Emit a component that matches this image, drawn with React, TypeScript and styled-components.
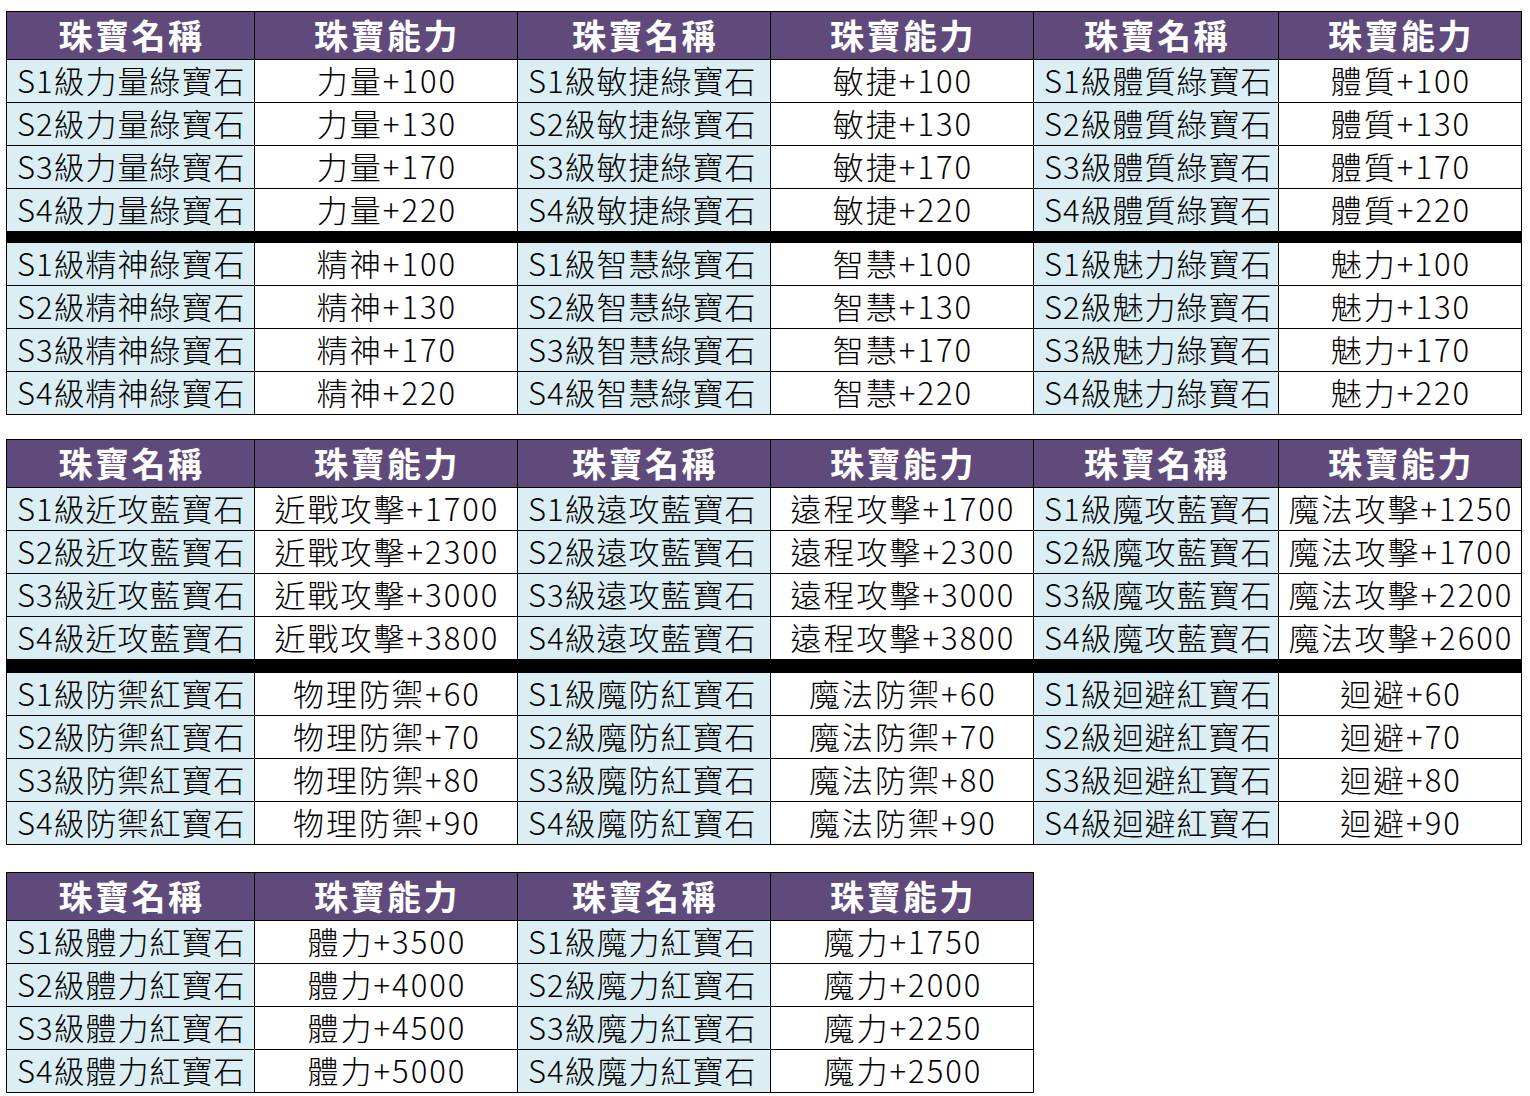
import React from "react";
import styled, { createGlobalStyle } from "styled-components";

const GlobalStyle = createGlobalStyle`
  html, body {
    margin: 0;
    padding: 0;
    background: #ffffff;
  }
  body {
    font-family: "Noto Sans CJK TC", "Noto Sans", sans-serif;
    color: #000;
  }
`;

const Page = styled.div`
  padding: 11px 0 0 6px;
  display: flex;
  flex-direction: column;
  align-items: flex-start;
`;

const Table = styled.table<{ $gap: number }>`
  border-collapse: collapse;
  table-layout: fixed;
  margin-bottom: ${({ $gap }) => $gap}px;
`;

const HeadCell = styled.th`
  background: #604a7b;
  color: #ffffff;
  border: 1px solid #000;
  height: 45px;
  padding: 0 0 2px 2px;
  font-size: 34px;
  font-weight: 700;
  line-height: 44px;
  text-align: center;
  letter-spacing: 2.5px;
`;

const Row = styled.tr<{ $split: number }>`
  & > td {
    border-top: ${({ $split }) => ($split ? `${$split}px solid #000` : "1px solid #000")};
  }
`;

const Cell = styled.td<{ $kind: "name" | "value" }>`
  border: 1px solid #000;
  height: 40px;
  padding: 0 0 2px ${({ $kind }) => ($kind === "name" ? "10px" : "2px")};
  background: ${({ $kind }) => ($kind === "name" ? "#daeef3" : "#ffffff")};
  text-align: ${({ $kind }) => ($kind === "name" ? "left" : "center")};
  font-size: 31px;
  font-weight: 300;
  letter-spacing: ${({ $kind }) => ($kind === "name" ? "1px" : "2px")};
  line-height: 40px;
  white-space: nowrap;
`;

const widths = [248, 263, 253, 263, 245, 243];

type Gem = { name: string; value: string };

const levels = ["S1", "S2", "S3", "S4"];

function series(kind: string, stat: string, nums: number[]): Gem[] {
  return levels.map((lv, i) => ({ name: `${lv}級${kind}寶石`, value: `${stat}+${nums[i]}` }));
}

const base = [100, 130, 170, 220];

const tables: { groups: Gem[][][]; split: number; gap: number }[] = [
  {
    groups: [
      [series("力量綠", "力量", base), series("敏捷綠", "敏捷", base), series("體質綠", "體質", base)],
      [series("精神綠", "精神", base), series("智慧綠", "智慧", base), series("魅力綠", "魅力", base)],
    ],
    split: 12,
    gap: 24,
  },
  {
    groups: [
      [
        series("近攻藍", "近戰攻擊", [1700, 2300, 3000, 3800]),
        series("遠攻藍", "遠程攻擊", [1700, 2300, 3000, 3800]),
        series("魔攻藍", "魔法攻擊", [1250, 1700, 2200, 2600]),
      ],
      [
        series("防禦紅", "物理防禦", [60, 70, 80, 90]),
        series("魔防紅", "魔法防禦", [60, 70, 80, 90]),
        series("迴避紅", "迴避", [60, 70, 80, 90]),
      ],
    ],
    split: 14,
    gap: 27,
  },
  {
    groups: [
      [
        series("體力紅", "體力", [3500, 4000, 4500, 5000]),
        series("魔力紅", "魔力", [1750, 2000, 2250, 2500]),
      ],
    ],
    split: 0,
    gap: 0,
  },
];

function GemTable({ groups, split, gap }: { groups: Gem[][][]; split: number; gap: number }) {
  const pairs = groups[0].length;
  return (
    <Table $gap={gap}>
      <colgroup>
        {widths.slice(0, pairs * 2).map((w, i) => (
          <col key={i} style={{ width: w }} />
        ))}
      </colgroup>
      <thead>
        <tr>
          {Array.from({ length: pairs }).flatMap((_, i) => [
            <HeadCell key={`n${i}`}>珠寶名稱</HeadCell>,
            <HeadCell key={`v${i}`}>珠寶能力</HeadCell>,
          ])}
        </tr>
      </thead>
      <tbody>
        {groups.flatMap((group, g) =>
          levels.map((_, r) => (
            <Row key={`${g}-${r}`} $split={g > 0 && r === 0 ? split : 0}>
              {group.flatMap((col, c) => [
                <Cell key={`n${c}`} $kind="name">{col[r].name}</Cell>,
                <Cell key={`v${c}`} $kind="value">{col[r].value}</Cell>,
              ])}
            </Row>
          ))
        )}
      </tbody>
    </Table>
  );
}

export default function App() {
  return (
    <Page>
      <GlobalStyle />
      {tables.map((t, i) => (
        <GemTable key={i} groups={t.groups} split={t.split} gap={t.gap} />
      ))}
    </Page>
  );
}
